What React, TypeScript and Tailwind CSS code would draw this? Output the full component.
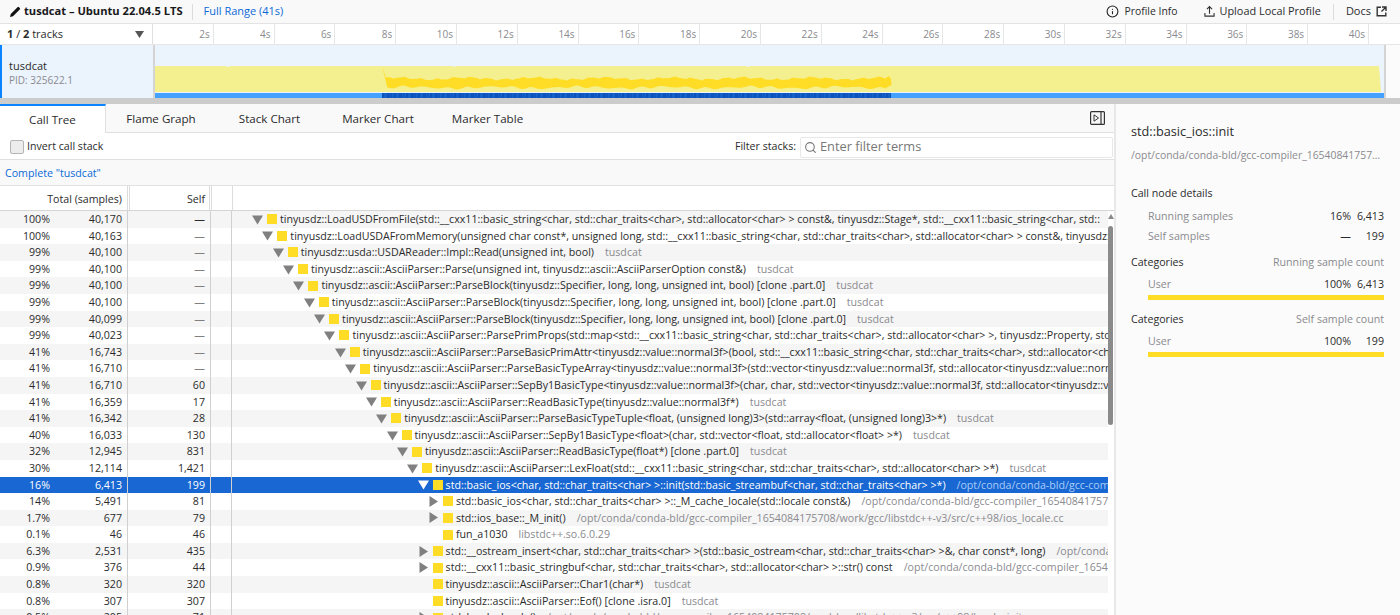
import React from "react";
import { FiInfo, FiSearch } from "react-icons/fi";

type Row = {
  pct: string;
  total: string;
  self: string;
  level: number;
  toggle?: "open" | "closed";
  name: string;
  lib: string;
};

const P = "tinyusdz::ascii::AsciiParser::";
const STR = "std::__cxx11::basic_string<char, std::char_traits<char>, std::allocator<char> >";
const GCC = "/opt/conda/conda-bld/gcc-compiler_1654084175708/work/gcc/libstdc++-v3/src/c++98/ios_locale.cc";

const rows: Row[] = [
  { pct: "100%", total: "40,170", self: "—", level: 0, toggle: "open", name: `tinyusdz::LoadUSDFromFile(${STR} const&, tinyusdz::Stage*, std::__cxx11::basic_string<char, std::`, lib: "" },
  { pct: "100%", total: "40,163", self: "—", level: 1, toggle: "open", name: `tinyusdz::LoadUSDAFromMemory(unsigned char const*, unsigned long, ${STR} const&, tinyusdz::Stage*, ${STR})`, lib: "" },
  { pct: "99%", total: "40,100", self: "—", level: 2, toggle: "open", name: "tinyusdz::usda::USDAReader::Impl::Read(unsigned int, bool)", lib: "tusdcat" },
  { pct: "99%", total: "40,100", self: "—", level: 3, toggle: "open", name: `${P}Parse(unsigned int, tinyusdz::ascii::AsciiParserOption const&)`, lib: "tusdcat" },
  { pct: "99%", total: "40,100", self: "—", level: 4, toggle: "open", name: `${P}ParseBlock(tinyusdz::Specifier, long, long, unsigned int, bool) [clone .part.0]`, lib: "tusdcat" },
  { pct: "99%", total: "40,100", self: "—", level: 5, toggle: "open", name: `${P}ParseBlock(tinyusdz::Specifier, long, long, unsigned int, bool) [clone .part.0]`, lib: "tusdcat" },
  { pct: "99%", total: "40,099", self: "—", level: 6, toggle: "open", name: `${P}ParseBlock(tinyusdz::Specifier, long, long, unsigned int, bool) [clone .part.0]`, lib: "tusdcat" },
  { pct: "99%", total: "40,023", self: "—", level: 7, toggle: "open", name: `${P}ParsePrimProps(std::map<${STR}, tinyusdz::Property, std::less<${STR}>>)`, lib: "" },
  { pct: "41%", total: "16,743", self: "—", level: 8, toggle: "open", name: `${P}ParseBasicPrimAttr<tinyusdz::value::normal3f>(bool, ${STR})`, lib: "" },
  { pct: "41%", total: "16,710", self: "—", level: 9, toggle: "open", name: `${P}ParseBasicTypeArray<tinyusdz::value::normal3f>(std::vector<tinyusdz::value::normal3f, std::allocator<tinyusdz::value::normal3f> >*)`, lib: "" },
  { pct: "41%", total: "16,710", self: "60", level: 10, toggle: "open", name: `${P}SepBy1BasicType<tinyusdz::value::normal3f>(char, char, std::vector<tinyusdz::value::normal3f, std::allocator<tinyusdz::value::normal3f> >*)`, lib: "" },
  { pct: "41%", total: "16,359", self: "17", level: 11, toggle: "open", name: `${P}ReadBasicType(tinyusdz::value::normal3f*)`, lib: "tusdcat" },
  { pct: "41%", total: "16,342", self: "28", level: 12, toggle: "open", name: `${P}ParseBasicTypeTuple<float, (unsigned long)3>(std::array<float, (unsigned long)3>*)`, lib: "tusdcat" },
  { pct: "40%", total: "16,033", self: "130", level: 13, toggle: "open", name: `${P}SepBy1BasicType<float>(char, std::vector<float, std::allocator<float> >*)`, lib: "tusdcat" },
  { pct: "32%", total: "12,945", self: "831", level: 14, toggle: "open", name: `${P}ReadBasicType(float*) [clone .part.0]`, lib: "tusdcat" },
  { pct: "30%", total: "12,114", self: "1,421", level: 15, toggle: "open", name: `${P}LexFloat(${STR}*)`, lib: "tusdcat" },
  { pct: "16%", total: "6,413", self: "199", level: 16, toggle: "open", name: "std::basic_ios<char, std::char_traits<char> >::init(std::basic_streambuf<char, std::char_traits<char> >*)", lib: "/opt/conda/conda-bld/gcc-compiler_1654084175708/work/gcc" },
  { pct: "14%", total: "5,491", self: "81", level: 17, toggle: "closed", name: "std::basic_ios<char, std::char_traits<char> >::_M_cache_locale(std::locale const&)", lib: GCC },
  { pct: "1.7%", total: "677", self: "79", level: 17, toggle: "closed", name: "std::ios_base::_M_init()", lib: GCC },
  { pct: "0.1%", total: "46", self: "46", level: 17, name: "fun_a1030", lib: "libstdc++.so.6.0.29" },
  { pct: "6.3%", total: "2,531", self: "435", level: 16, toggle: "closed", name: "std::__ostream_insert<char, std::char_traits<char> >(std::basic_ostream<char, std::char_traits<char> >&, char const*, long)", lib: GCC },
  { pct: "0.9%", total: "376", self: "44", level: 16, toggle: "closed", name: "std::__cxx11::basic_stringbuf<char, std::char_traits<char>, std::allocator<char> >::str() const", lib: GCC },
  { pct: "0.8%", total: "320", self: "320", level: 16, name: `${P}Char1(char*)`, lib: "tusdcat" },
  { pct: "0.8%", total: "307", self: "307", level: 16, name: `${P}Eof() [clone .isra.0]`, lib: "tusdcat" },
  { pct: "0.5%", total: "205", self: "71", level: 16, toggle: "closed", name: "std::locale::locale()", lib: "/opt/conda/conda-bld/gcc-compiler_1654084175708/work/gcc/libstdc++-v3/src/c++98/locale_init.cc" },
];

const ticks = Array.from({ length: 20 }, (_, i) => `${(i + 1) * 2}s`);
const tabs = [
  { label: "Call Tree", w: "w-[106px]" },
  { label: "Flame Graph", w: "w-[110px]" },
  { label: "Stack Chart", w: "w-[107px]" },
  { label: "Marker Chart", w: "w-[110px]" },
  { label: "Marker Table", w: "w-[109px]" },
];

// wobbly band for the selected call node, x from 382 to 891 in page pixels
function bandPath() {
  const top: string[] = [];
  const bottom: string[] = [];
  for (let x = 387; x <= 886; x += 3) {
    const w = Math.sin(x * 0.37) * 0.8 + Math.sin(x * 0.091) * 1 + Math.sin(x * 1.3) * 0.4;
    const w2 = Math.sin(x * 0.29 + 1) * 0.9 + Math.sin(x * 0.073) * 0.8 + Math.sin(x * 1.7) * 0.4;
    top.push(`${x - 155},${(33.5 + w).toFixed(1)}`);
    bottom.push(`${x - 155},${(42.5 + w2).toFixed(1)}`);
  }
  return `M227,21 L229,27 L231,33 L${top.join(" L")} L734,31 L736,34 L736.500,40 L${bottom.reverse().join(" L")} L232,41 Z`;
}

const stripes = Array.from({ length: 254 }, (_, i) => ({
  x: 227 + i * 2,
  w: 1 + ((i * 7) % 2),
  c: ["#0d52bd", "#1b6ad0", "#0b47ad", "#3c8be2", "#1260c8", "#6aaef0"][(i * i + i * 3) % 6],
}));

function Triangle({ open, white }: { open: boolean; white: boolean }) {
  return (
    <svg width="11" height="11" viewBox="0 0 11 11" className="shrink-0">
      <path d={open ? "M0 1.5H11L5.5 10.5Z" : "M1.5 0L10 5.5L1.5 11Z"} fill={white ? "#ffffff" : "#808080"} />
    </svg>
  );
}

function TreeRow({ row, index }: { row: Row; index: number }) {
  const selected = row.level === 16 && row.pct === "16%";
  const stripe = index % 2 === 0 ? "bg-[#f5f5f5]" : "bg-white";
  return (
    <div className={`flex h-[16.6px] items-center leading-[16.6px] whitespace-nowrap ${selected ? "bg-[#1967d2] text-white" : `${stripe} text-[#2b2b2b]`}`}>
      <div className="w-[50px] shrink-0 text-right">{row.pct}</div>
      <div className="w-[72px] shrink-0 text-right">{row.total}</div>
      <div className="ml-[5px] h-full w-px shrink-0 bg-[#d0d0d0]"></div>
      <div className={`w-[77px] shrink-0 text-right ${row.self === "—" && index > 0 ? "text-[#808080]" : ""}`}>{row.self}</div>
      <div className="ml-[5px] h-full w-px shrink-0 bg-[#d0d0d0]"></div>
      <div className="w-5 shrink-0"></div>
      <div className="h-full w-px shrink-0 bg-[#d0d0d0]"></div>
      <div className="flex min-w-0 flex-1 items-center overflow-hidden" style={{ paddingLeft: 20 + row.level * 10.35 }}>
        <div className="flex w-[11px] shrink-0 justify-center">
          {row.toggle && <Triangle open={row.toggle === "open"} white={selected} />}
        </div>
        <span className="ml-[4px] mr-[3px] h-[10px] w-[10px] shrink-0 bg-[#ffdd26]"></span>
        <span>{row.name}</span>
        {row.lib && <span className={`ml-[11px] ${selected ? "text-[#a9cdf8]" : "text-[#8a8a8f]"}`}>{row.lib}</span>}
      </div>
    </div>
  );
}

function CategoryBlock({ title, value, count }: { title: string; value: string; count: string }) {
  return (
    <div className="mt-[7px]">
      <div className="flex h-[17px] items-center justify-between">
        <span className="text-[#2b2b2b]">Categories</span>
        <span className="text-[#8a8a8f]">{title}</span>
      </div>
      <div className="mt-[5px] flex h-[17px] items-center justify-between pl-[17px]">
        <span className="text-[#8a8a8f]">User</span>
        <span className="flex text-[#2b2b2b]">
          <span>{value}</span>
          <span className="w-[33px] text-right">{count}</span>
        </span>
      </div>
      <div className="ml-[17px] mt-[2px] h-[5px] bg-[#ffdd26]"></div>
    </div>
  );
}

export default function App() {
  return (
    <div className="flex h-[615px] w-[1400px] flex-col overflow-hidden bg-white font-['Open_Sans','Liberation_Sans',sans-serif] text-[10.65px] text-[#2b2b2b]">
      {/* top bar */}
      <div className="flex h-[24px] shrink-0 items-center border-b border-[#e3e3e3] bg-[#f9f9fa] pl-[9px]">
        <svg width="12" height="12" viewBox="0 0 24 24" className="shrink-0">
          <path d="M2 22l1.5-6L17 2.5a2 2 0 0 1 3 0l1.5 1.5a2 2 0 0 1 0 3L8 20.5Z" fill="#111" />
        </svg>
        <span className="ml-[3px] text-[11.15px] font-bold text-[#18181a]">tusdcat – Ubuntu 22.04.5 LTS</span>
        <div className="ml-[9px] h-[16px] w-px bg-[#dcdcdc]"></div>
        <span className="ml-[11px] text-[11px] text-[#0a6ad6]">Full Range (41s)</span>
        <div className="flex-1"></div>
        <FiInfo className="text-[13px] text-[#222]" />
        <span className="ml-[5px] text-[10.4px]">Profile Info</span>
        <svg width="11" height="13" viewBox="0 0 12 13" className="ml-[26px]" fill="none" stroke="#333" strokeWidth="1.2">
          <path d="M6 9V1.5M3.2 4L6 1.2 8.800 4M1 8v3.500h10V8" />
        </svg>
        <span className="ml-[5px] text-[10.9px]">Upload Local Profile</span>
        <div className="ml-[12px] h-[16px] w-px bg-[#dcdcdc]"></div>
        <span className="ml-[12px] text-[11px]">Docs</span>
        <svg width="11" height="11" viewBox="0 0 11 11" className="ml-[5px] mr-[13px]" fill="none" stroke="#333" strokeWidth="1.4">
          <path d="M5 1.200H1.200v8.600h8.600V6.500M6 1h4v4M10 1L5.500 5.500" />
        </svg>
      </div>

      {/* time ruler */}
      <div className="flex h-[21px] shrink-0 border-b border-[#e6e6e6]">
        <div className="flex w-[153px] shrink-0 items-center justify-between border-r border-[#e0e0e0] pl-[7px] pr-[8px] pt-[1px] text-[11px]">
          <span>
            <b>1</b> / <b>2</b> tracks
          </span>
          <svg width="9" height="7" viewBox="0 0 9 7">
            <path d="M0 0H9L4.500 7Z" fill="#555" />
          </svg>
        </div>
        <div className="flex text-[10px] text-[#8a8a8f]">
          {ticks.map((t) => (
            <div key={t} className="flex w-[60.8px] items-center justify-end border-r border-[#e6e6e6] pr-[3px] pt-[1px]">
              {t}
            </div>
          ))}
        </div>
      </div>

      {/* selected track */}
      <div className="flex h-[53px] shrink-0 bg-[#fbfbfb]">
        <div className="flex w-[153px] shrink-0 flex-col justify-center border-l-2 border-[#0a84ff] bg-[#ebf3fd] pl-[7px] pt-[2px]">
          <span className="text-[11px] leading-[15px]">tusdcat</span>
          <span className="text-[10px] leading-[15px] text-[#8a8a8f]">PID: 325622.1</span>
        </div>
        <div className="w-[2px] shrink-0 bg-[#d4d4d4]"></div>
        <svg width="1229" height="53" viewBox="0 0 1229 53" className="shrink-0 bg-[#ebf3fd]">
          <path d="M0 21L2 21H70L73 21.700L77 21H296L299 21.700L302 21H590L593 21.700L596 21H1224L1226 47H0Z" fill="#f4ef8f" />
          <path d={bandPath()} fill="#ffdd26" />
          <rect x="0" y="48" width="1229" height="5" fill="#45a1ff" />
          <rect x="227" y="48" width="509" height="5" fill="#0d52bd" />
          {stripes.map((s) => (
            <rect key={s.x} x={s.x} y="48" width={s.w} height="5" fill={s.c} />
          ))}
        </svg>
        <div className="w-[2px] shrink-0 bg-[#d4d4d4]"></div>
      </div>

      {/* splitter */}
      <div className="h-[6px] shrink-0 bg-[#cccccc]"></div>

      <div className="flex min-h-0 flex-1">
        {/* call tree panel */}
        <div className="flex w-[1114px] shrink-0 flex-col">
          <div className="flex h-[29px] shrink-0 items-stretch bg-[#f9f9fa] text-[11.6px]">
            {tabs.map((t, i) => (
              <div
                key={t.label}
                className={`flex items-center justify-center ${t.w} ${i === 0 ? "border-r border-t-2 border-[#e0e0e0] border-t-[#0a84ff] bg-white" : "border-b border-[#e0e0e0] pt-[2px]"}`}
              >
                {t.label}
              </div>
            ))}
            <div className="flex flex-1 items-center justify-end border-b border-[#e0e0e0] pr-[9px]">
              <svg width="15" height="14" viewBox="0 0 15 14" fill="none" stroke="#333">
                <rect x="0.600" y="0.600" width="13.800" height="12.800" rx="1" strokeWidth="1.200" />
                <path d="M4 3.800l4.500 3.200L4 10.200Z" fill="#fff" strokeWidth="1" />
                <path d="M11 1v12" strokeWidth="1.200" />
              </svg>
            </div>
          </div>

          <div className="flex h-[27px] shrink-0 items-center border-b border-[#e0e0e0] pl-[10px] pt-[2px]">
            <span className="h-[14px] w-[14px] rounded-[2px] border border-[#b5b5b5] bg-[#ececec]"></span>
            <span className="ml-[3px]">Invert call stack</span>
            <div className="flex-1"></div>
            <span>Filter stacks:</span>
            <div className="ml-[4px] flex h-[21px] w-[313px] items-center rounded-[2px] border border-[#e8e8e8] pl-[3px]">
              <FiSearch className="text-[13px] text-[#777]" />
              <span className="ml-[3px] text-[12.8px] text-[#777]">Enter filter terms</span>
            </div>
            <div className="w-[1px]"></div>
          </div>

          <div className="flex h-[26px] shrink-0 items-center border-b border-[#e0e0e0] bg-[#f9f9fa] pl-[5px] pt-[2px] text-[#0a6ad6]">Complete "tusdcat"</div>

          <div className="flex h-[25px] shrink-0 items-center border-b border-[#d5d5d5] text-[#2b2b2b]">
            <div className="w-[122px] shrink-0 pt-[3px] text-right">Total (samples)</div>
            <div className="ml-[5px] h-full w-[3px] shrink-0 border-x border-[#dcdcdc]"></div>
            <div className="w-[75px] shrink-0 pt-[3px] text-right">Self</div>
            <div className="ml-[4px] h-full w-[3px] shrink-0 border-x border-[#dcdcdc]"></div>
            <div className="w-5 shrink-0"></div>
            <div className="h-full w-px shrink-0 bg-[#dcdcdc]"></div>
          </div>

          <div className="relative min-h-0 flex-1 overflow-hidden pr-[6px]">
            {rows.map((r, i) => (
              <TreeRow key={i} row={r} index={i} />
            ))}
            <svg width="6" height="5" viewBox="0 0 6 5" className="absolute right-[0px] top-[3px]">
              <path d="M3 0L6 5H0Z" fill="#8a8a8a" />
            </svg>
            <div className="absolute right-[1px] top-[15px] h-[199px] w-[5px] rounded-[3px] bg-[#8a8a8a]"></div>
          </div>
        </div>

        {/* sidebar */}
        <div className="w-[286px] shrink-0 border-l-2 border-[#e8e8e8] bg-[#fbfbfb] pl-[15px] pr-[16px]">
          <div className="mt-[18px] text-[12.7px] leading-[18px]">std::basic_ios::init</div>
          <div className="mt-[7px] overflow-hidden text-[10.4px] leading-[16px] text-ellipsis whitespace-nowrap text-[#8a8a8f]">/opt/conda/conda-bld/gcc-compiler_1654084175708/work</div>
          <div className="mt-[22px] leading-[17px]">Call node details</div>
          <div className="mt-[5px] flex h-[20px] items-center justify-between pl-[17px]">
            <span className="text-[#8a8a8f]">Running samples</span>
            <span className="flex">
              <span>16%</span>
              <span className="w-[33px] text-right">6,413</span>
            </span>
          </div>
          <div className="flex h-[20px] items-center justify-between pl-[17px]">
            <span className="text-[#8a8a8f]">Self samples</span>
            <span className="flex">
              <span>—</span>
              <span className="w-[33px] text-right">199</span>
            </span>
          </div>
          <CategoryBlock title="Running sample count" value="100%" count="6,413" />
          <div className="mt-[3px] pt-[1px]">
            <CategoryBlock title="Self sample count" value="100%" count="199" />
          </div>
        </div>
      </div>
    </div>
  );
}
